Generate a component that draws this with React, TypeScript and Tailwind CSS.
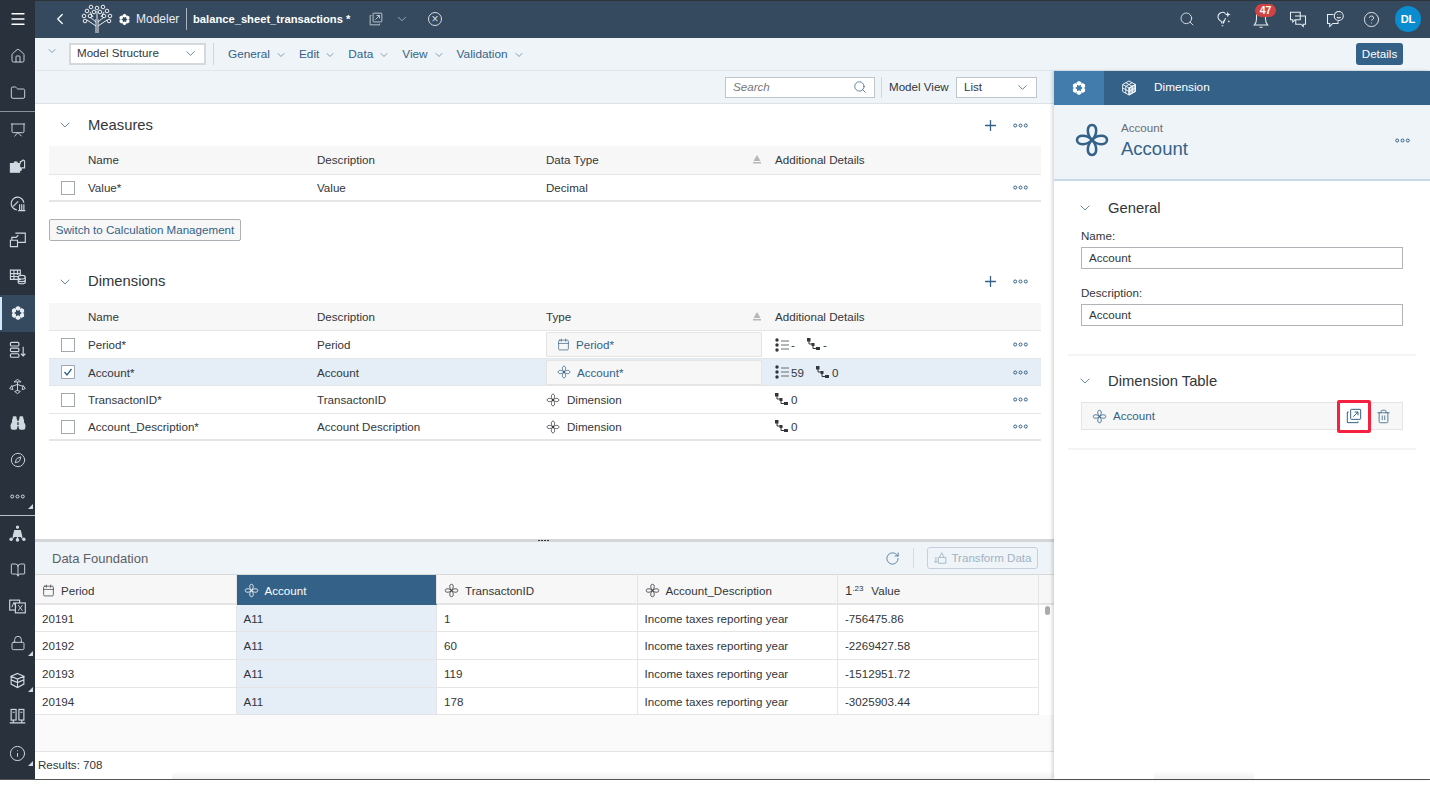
import type { ReactNode } from 'react';
import {
  Binoculars,
  BookOpen,
  Calendar,
  ChevronDown,
  ChevronLeft,
  CircleHelp,
  Compass,
  Folder,
  House,
  Info,
  Lock,
  Menu,
  Plus,
  Presentation,
  RotateCw,
  Search,
  Trash2,
} from 'lucide-react';

const BLUE = '#346187';

/** The four-loop glyph SAP uses for a dimension. */
function Flower({ size = 14, color = 'currentColor', width = 1.4 }: { size?: number; color?: string; width?: number }) {
  const petal = 'M12 12C8.6 9 8 2 12 2s3.400 7 0 10z';
  return (
    <svg width={size} height={size} viewBox="0 0 24 24" fill="none" stroke={color} strokeWidth={width} className="shrink-0">
      {[0, 90, 180, 270].map((r) => (
        <path key={r} d={petal} transform={`rotate(${r} 12 12)`} />
      ))}
      {size < 20 && <circle cx="12" cy="12" r="1.6" fill={color} stroke="none" />}
    </svg>
  );
}

/** Ring of little cells, the Modeler product glyph. */
function ModelGlyph({ size = 16, color = '#fff' }: { size?: number; color?: string }) {
  return (
    <svg width={size} height={size} viewBox="0 0 24 24" fill={color} className="shrink-0">
      {[0, 60, 120, 180, 240, 300].map((r) => (
        <path key={r} d="M12 1.500l3.600 2v3.200l-3.600 1.800-3.600-1.800V3.500z" transform={`rotate(${r} 12 12)`} />
      ))}
    </svg>
  );
}

function CubeGlyph() {
  return (
    <svg width={16} height={16} viewBox="0 0 24 24" fill="none" stroke="#fff" strokeWidth="1.300" className="shrink-0">
      <path d="M12 1.500l9.500 5.200v10.600L12 22.500l-9.500-5.200V6.700z" />
      <path d="M2.500 6.700L12 12l9.500-5.300M12 12v10.500M7.200 4.100l9.500 5.300M16.800 4.100L7.200 9.400M2.500 12l9.500 5.200 9.500-5.200M7.200 9.400v10.500M16.800 9.400v10.500" />
      <path d="M12 12l9.500-5.300v10.600L12 22.500z" fill="#fff" fillOpacity="0.55" />
    </svg>
  );
}

function TreeLogo() {
  return (
    <svg width={34} height={30} viewBox="0 0 34 30" fill="none" stroke="#fff" strokeWidth="0.9" className="shrink-0">
      <path d="M16 29V15M18 29V15M16 18l-6-5M18 18l6-5M16 22l-9-6M18 22l9-6M17 15V7M13 13l-3-5M21 13l3-5" />
      {[
        [17, 4],
        [11, 3],
        [23, 3],
        [7, 7],
        [27, 7],
        [4, 12],
        [30, 12],
        [5, 17],
        [29, 17],
        [10, 12],
        [24, 12],
        [14, 8],
        [20, 8],
      ].map(([cx, cy]) => (
        <circle key={`${cx}-${cy}`} cx={cx} cy={cy} r="1.8" />
      ))}
    </svg>
  );
}

/** Box with an arrow leaving it, stacked on a second box. */
function OpenInNew({ color = BLUE, size = 17 }: { color?: string; size?: number }) {
  return (
    <svg width={size} height={size} viewBox="0 0 24 24" fill="none" stroke={color} strokeWidth="1.5" className="shrink-0">
      <rect x="7" y="2" width="15" height="15" rx="1" />
      <path d="M4 6H2v16h16v-2M11 13l7-7M13 6h5v5" />
    </svg>
  );
}

function Hierarchy() {
  return (
    <svg width={13} height={13} viewBox="0 0 13 13" className="shrink-0" fill="#32363a">
      <rect x="0" y="0" width="3.500" height="3.500" />
      <rect x="4.500" y="5" width="3" height="3" />
      <rect x="9" y="9" width="4" height="3" />
      <path d="M2 3v3h3M6 8v2.500h3" fill="none" stroke="#32363a" />
    </svg>
  );
}

function ListIcon() {
  return (
    <svg width={14} height={14} viewBox="0 0 14 14" className="shrink-0">
      {[2, 7, 12].map((y) => (
        <circle key={y} cx="2" cy={y} r="1.700" fill="#32363a" />
      ))}
      <path d="M6 3h8M6 7h8M6 11h8" stroke="#6a6d70" strokeWidth="1" />
    </svg>
  );
}

function MoreDots({ color = BLUE }: { color?: string }) {
  return (
    <svg width={15} height={5} viewBox="0 0 15 5" fill="none" stroke={color} strokeWidth="1" className="shrink-0">
      <circle cx="2.200" cy="2.500" r="1.500" />
      <circle cx="7.500" cy="2.500" r="1.500" />
      <circle cx="12.800" cy="2.500" r="1.500" />
    </svg>
  );
}

function SortUp() {
  return (
    <svg width={10} height={9} viewBox="0 0 10 9" fill="#b5b7b9" className="shrink-0">
      <path d="M5 0l3.500 6h-7zM1 7h8v1.500H1z" />
    </svg>
  );
}

function Check() {
  return (
    <svg width={10} height={10} viewBox="0 0 10 10" fill="none" stroke="#346187" strokeWidth="1.300">
      <path d="M1.500 5l2.500 3 4.500-6" />
    </svg>
  );
}

function Checkbox({ checked }: { checked?: boolean }) {
  return (
    <div className="ml-3 flex h-[14px] w-[14px] items-center justify-center border border-[#a3a8ad] bg-white">
      {checked && <Check />}
    </div>
  );
}

const sw = { size: 16, strokeWidth: 1.4, color: '#d1d9e0' };

function svgIcon(children: ReactNode) {
  return (
    <svg width={17} height={17} viewBox="0 0 24 24" fill="none" stroke="#d1d9e0" strokeWidth="1.600">
      {children}
    </svg>
  );
}

const upper: { icon: ReactNode; corner?: boolean; active?: boolean }[] = [
  { icon: <Presentation {...sw} /> },
  {
    icon: svgIcon(
      <>
        <path d="M2 8h5a2.500 2.500 0 015 0h3v5a2.500 2.500 0 010 5v2H2z" fill="#d1d9e0" />
        <path d="M16 8V5h2a2 2 0 014 0v9h-4" />
      </>,
    ),
  },
  {
    icon: svgIcon(
      <>
        <path d="M11 21a9 9 0 1110-10M6 16l7-7" />
        <path d="M15 13v9M18 13v9M21 13v9M13 22h10" />
      </>,
    ),
  },
  {
    icon: svgIcon(
      <>
        <path d="M9 3h14v13H13M2 13h10v9H2zM4 13V9h6l3-3" />
      </>,
    ),
  },
  {
    icon: svgIcon(
      <>
        <path d="M2 3h14v13H2zM2 8h14M2 12h11M7 3v13M12 3v7" />
        <ellipse cx="18" cy="13" rx="5" ry="2.500" fill="#29313c" />
        <path d="M13 13v7c0 3 10 3 10 0v-7M13 17c0 3 10 3 10 0" />
      </>,
    ),
  },
  { icon: <ModelGlyph size={16} color="#e6edf3" />, active: true },
  {
    icon: svgIcon(
      <>
        <rect x="2" y="2" width="12" height="5" rx="1.500" />
        <rect x="2" y="10" width="12" height="5" rx="1.500" />
        <rect x="2" y="18" width="12" height="5" rx="1.500" />
        <path d="M20 8v13M17 18l3 3 3-3" />
      </>,
    ),
  },
  {
    icon: svgIcon(
      <path d="M12 2l5 3.500H7zM1 15l3-4.500 1.500 6zM23 15l-3-4.500-1.500 6zM12 22l-4-3 4-1.500 4 1.500zM12 5.500V18M4 12l8-3 8 3" strokeWidth="1.300" />,
    ),
  },
  { icon: <Binoculars size={16} strokeWidth={2} color="#d1d9e0" fill="#d1d9e0" /> },
  { icon: <Compass {...sw} /> },
  { icon: <MoreDots color="#d1d9e0" />, corner: true },
];

const lower: { icon: ReactNode; corner?: boolean }[] = [
  {
    icon: svgIcon(
      <>
        <circle cx="12" cy="3" r="1.500" fill="#d1d9e0" />
        <path d="M8 8h8l2 8H6z" fill="#d1d9e0" />
        <circle cx="3" cy="20" r="1.700" fill="#d1d9e0" />
        <circle cx="21" cy="20" r="1.700" fill="#d1d9e0" />
        <circle cx="12" cy="21" r="1.700" fill="#d1d9e0" />
        <path d="M5 19l2-2M19 19l-2-2M12 16v4" />
      </>,
    ),
  },
  { icon: <BookOpen {...sw} /> },
  {
    icon: svgIcon(
      <>
        <rect x="1" y="3" width="14" height="14" />
        <rect x="9" y="7" width="14" height="14" fill="#29313c" />
        <path d="M4 13l3-7 3 7M13 10l6 8M19 10l-6 8" strokeWidth="1.300" />
      </>,
    ),
  },
  { icon: <Lock {...sw} />, corner: true },
  {
    icon: svgIcon(
      <>
        <path d="M12 2l9 4-9 4-9-4zM3 6v5l9 4 9-4V6M3 11v6l9 5 9-5v-6M12 10v12" />
      </>,
    ),
    corner: true,
  },
  {
    icon: svgIcon(
      <>
        <rect x="3" y="2" width="7" height="15" />
        <rect x="14" y="2" width="7" height="15" />
        <path d="M5 6h3M16 6h3M1 21h22M6 17v4M18 17v4" />
      </>,
    ),
  },
  { icon: <Info {...sw} size={17} />, corner: true },
];

function RailItem({ icon, corner, active }: { icon: ReactNode; corner?: boolean; active?: boolean }) {
  return (
    <div className={`relative flex h-[36.7px] items-center justify-center ${active ? 'bg-[#354a5f]' : ''}`}>
      {active && <div className="absolute left-0 top-[2px] h-[33px] w-[2px] bg-[#d1e8ff]" />}
      {icon}
      {corner && (
        <div className="absolute bottom-[6px] right-[2px] h-0 w-0 border-b-[5px] border-l-[5px] border-b-[#d1d9e0] border-l-transparent" />
      )}
    </div>
  );
}

function Rail() {
  return (
    <div className="flex w-[35px] shrink-0 flex-col bg-[#29313c]">
      <div className="flex h-[38px] shrink-0 items-center justify-center">
        <Menu size={18} color="#fff" strokeWidth={1.800} />
      </div>
      <RailItem icon={<House {...sw} />} />
      <RailItem icon={<Folder {...sw} />} />
      <div className="-mb-px h-px bg-[#8a939c]" />
      {upper.map((it, i) => (
        <RailItem key={i} {...it} />
      ))}
      <div className="-mb-px h-px bg-[#b8bfc6]" />
      {lower.map((it, i) => (
        <RailItem key={i} {...it} />
      ))}
    </div>
  );
}

function ShellIcon({ children }: { children: ReactNode }) {
  return <div className="relative flex w-[37px] items-center justify-center">{children}</div>;
}

function TopBar() {
  const c = { size: 16, color: '#e8edf2', strokeWidth: 1.300 };
  return (
    <div className="flex h-[38px] shrink-0 items-center border-t border-[#2e3338] bg-[#354a5f] pb-[1px] text-white">
      <ChevronLeft size={18} color="#fff" strokeWidth={1.700} className="ml-[16px]" />
      <div className="ml-[11px]">
        <TreeLogo />
      </div>
      <div className="ml-[4px]">
        <ModelGlyph size={13} />
      </div>
      <span className="ml-[5px] w-[44px] whitespace-nowrap text-[12px] text-[#e8edf2]">Modeler</span>
      <div className="mx-[6px] h-[22px] w-px bg-[#aab5c0]" />
      <span className="w-[176px] whitespace-nowrap text-[11.2px] font-bold">balance_sheet_transactions *</span>
      <OpenInNew color="#c9d3dc" size={14} />
      <ChevronDown size={14} color="#c9d3dc" strokeWidth={1.200} className="ml-[12px]" />
      <div className="ml-[19px] flex h-[14px] w-[14px] items-center justify-center rounded-full border border-[#d5dce3] text-[12px] leading-none text-[#d5dce3]">
        ×
      </div>
      <div className="ml-auto flex h-full items-stretch pr-[9px]">
        <ShellIcon>
          <Search {...c} />
        </ShellIcon>
        <ShellIcon>
          <svg width={18} height={18} viewBox="0 0 24 24" fill="none" stroke="#e8edf2" strokeWidth="1.400">
            <path d="M9 18v-2.500C6 14 4 12 4 9a6 6 0 0110-4.300M14 11c-.4 1.700-1.500 3-3 4.500V18zM9 21h2" />
            <path d="M17 2l1 3 3 1-3 1-1 3-1-3-3-1 3-1zM18.500 13l.5 1.500 1.500.5-1.500.5-.5 1.500-.5-1.500-1.500-.5 1.500-.5z" fill="#e8edf2" stroke="none" />
          </svg>
        </ShellIcon>
        <ShellIcon>
          <svg width={18} height={18} viewBox="0 0 24 24" fill="none" stroke="#e8edf2" strokeWidth="1.400">
            <path d="M3 20h18c-2-2-3-4-3-8V8a6 6 0 00-12 0v4c0 4-1 6-3 8zM10 23h4" />
          </svg>
          <div className="absolute left-[13px] top-[3px] flex h-[13px] w-[21px] items-center justify-center rounded-full bg-[#d04343] text-[10.5px] font-bold leading-none text-white">
            47
          </div>
        </ShellIcon>
        <ShellIcon>
          <svg width={18} height={18} viewBox="0 0 24 24" fill="none" stroke="#e8edf2" strokeWidth="1.400">
            <path d="M2 3h13v10H8l-3 3v-3H2zM8 8h14v11h-3v3l-3-3H9v-6" />
          </svg>
        </ShellIcon>
        <ShellIcon>
          <svg width={18} height={18} viewBox="0 0 24 24" fill="none" stroke="#e8edf2" strokeWidth="1.400">
            <path d="M10 6H2v12h3v4l4-4h7v-3" />
            <circle cx="17" cy="8" r="6" />
            <path d="M14.500 9.500c1 1.300 4 1.300 5 0M15 6h.5M18.500 6h.5" />
          </svg>
        </ShellIcon>
        <ShellIcon>
          <CircleHelp size={17} color="#e8edf2" strokeWidth={1.300} />
        </ShellIcon>
        <div className="ml-[5px] flex h-[26px] w-[26px] items-center justify-center self-center rounded-full bg-[#0a8dd0] text-[11px] font-bold text-white">
          DL
        </div>
      </div>
    </div>
  );
}

function MenuItem({ label, gap }: { label: string; gap: string }) {
  return (
    <div className={`flex items-center gap-[5px] text-[11.8px] text-[#346187] ${gap}`}>
      {label}
      <ChevronDown size={12} strokeWidth={1.200} color="#346187" />
    </div>
  );
}

function Toolbar() {
  return (
    <div className="flex h-[33px] shrink-0 items-center border-b border-[#dfe6ed] bg-[#eff4f9] pl-[11px] pr-[27px]">
      <ChevronDown size={12} strokeWidth={1.200} color="#346187" className="mb-[6px]" />
      <div className="ml-[11px] flex h-[22px] w-[137px] items-center justify-between border-2 border-[#d5d9dd] bg-white pb-[2px] pl-[6px] pr-[6px] text-[11.6px] text-[#32363a]">
        Model Structure
        <ChevronDown size={15} strokeWidth={1.200} color="#346187" />
      </div>
      <div className="ml-[7px] h-[22px] w-px bg-[#cfd6dc]" />
      <div className="ml-[14px] mt-[2px] flex items-center">
        <MenuItem label="General" gap="mr-[12px]" />
        <MenuItem label="Edit" gap="mr-[12px]" />
        <MenuItem label="Data" gap="mr-[12px]" />
        <MenuItem label="View" gap="mr-[12px]" />
        <MenuItem label="Validation" gap="" />
      </div>
      <div className="ml-auto flex h-[22px] w-[47px] items-center justify-center rounded-[3px] bg-[#346187] text-[11.6px] text-white">
        Details
      </div>
    </div>
  );
}

const cols = 'grid grid-cols-[39px_229px_229px_229px_1fr]';

function HeaderRow({ third }: { third: string }) {
  return (
    <div className={`${cols} h-[28.5px] items-center border-b border-[#e5e5e5] bg-[#f7f7f7] text-[11.6px] text-[#32363a]`}>
      <div />
      <div>Name</div>
      <div>Description</div>
      <div className="flex items-center justify-between pr-[13px]">
        {third}
        <SortUp />
      </div>
      <div>Additional Details</div>
    </div>
  );
}

function SectionHead({ title }: { title: string }) {
  return (
    <div className="flex h-[42px] items-center">
      <ChevronDown size={16} strokeWidth={1.100} color="#346187" className="ml-[8px]" />
      <span className="ml-[15px] text-[14.8px] text-[#32363a]">{title}</span>
      <Plus size={17} strokeWidth={1.800} color="#346187" className="ml-auto mr-[14px]" />
      <div className="mr-[13px]">
        <MoreDots />
      </div>
    </div>
  );
}

function TypeBox({ icon, label }: { icon: ReactNode; label: string }) {
  return (
    <div className="flex h-[25px] w-[216px] items-center gap-[6px] rounded-[1px] border border-[#e4e4e4] bg-[#f7f7f7] pl-[10px] text-[#346187]">
      {icon}
      {label}
    </div>
  );
}

function Details({ list, tree }: { list?: string; tree: string }) {
  return (
    <div className="flex items-center">
      {list !== undefined && (
        <>
          <ListIcon />
          <span className="ml-[2px] mr-[12px]">{list}</span>
        </>
      )}
      <Hierarchy />
      <span className="ml-[3px]">{tree}</span>
    </div>
  );
}

const dimensionRows: { name: string; desc: string; type: ReactNode; details: ReactNode; selected?: boolean }[] = [
  {
    name: 'Period*',
    desc: 'Period',
    type: <TypeBox icon={<Calendar size={13} strokeWidth={1.300} color="#346187" />} label="Period*" />,
    details: <Details list="-" tree="-" />,
  },
  {
    name: 'Account*',
    desc: 'Account',
    type: <TypeBox icon={<Flower size={14} color="#346187" />} label="Account*" />,
    details: <Details list="59" tree="0" />,
    selected: true,
  },
  {
    name: 'TransactonID*',
    desc: 'TransactonID',
    type: (
      <div className="flex items-center gap-[7px]">
        <Flower size={14} />
        Dimension
      </div>
    ),
    details: <Details tree="0" />,
  },
  {
    name: 'Account_Description*',
    desc: 'Account Description',
    type: (
      <div className="flex items-center gap-[7px]">
        <Flower size={14} />
        Dimension
      </div>
    ),
    details: <Details tree="0" />,
  },
];

function Row({
  name,
  desc,
  type,
  details,
  selected,
  last,
}: {
  name: string;
  desc: string;
  type: ReactNode;
  details: ReactNode;
  selected?: boolean;
  last?: boolean;
}) {
  return (
    <div
      className={`${cols} h-[27.5px] items-center pt-[1px] text-[11.6px] text-[#32363a] ${
        last ? 'border-b-2' : 'border-b'
      } border-[#e5e5e5] ${selected ? 'bg-[#e5edf6]' : 'bg-white'}`}
    >
      <Checkbox checked={selected} />
      <div>{name}</div>
      <div>{desc}</div>
      <div>{type}</div>
      <div className="flex items-center justify-between pr-[13px]">
        {details}
        <MoreDots />
      </div>
    </div>
  );
}

function ModelStructure() {
  return (
    <div className="flex h-[435px] shrink-0 flex-col overflow-hidden bg-white pl-[14px] pr-[13px]">
      <SectionHead title="Measures" />
      <HeaderRow third="Data Type" />
      <Row name="Value*" desc="Value" type="Decimal" details={<span />} last />
      <button className="mt-[17px] h-[22px] w-[192px] whitespace-nowrap rounded-[2px] border border-[#abb0b4] bg-[#f7f7f7] text-center text-[11.6px] leading-none text-[#346187]">
        Switch to Calculation Management
      </button>
      <div className="mt-[19.5px]">
        <SectionHead title="Dimensions" />
      </div>
      <HeaderRow third="Type" />
      {dimensionRows.map((r, i) => (
        <Row key={r.name} {...r} last={i === dimensionRows.length - 1} />
      ))}
    </div>
  );
}

const foundationCols = [
  { label: 'Period', icon: <Calendar size={13} strokeWidth={1.300} color="#32363a" /> },
  { label: 'Account', icon: <Flower size={15} color="#fff" />, active: true },
  { label: 'TransactonID', icon: <Flower size={15} /> },
  { label: 'Account_Description', icon: <Flower size={15} /> },
  {
    label: 'Value',
    icon: (
      <span className="text-[13px] leading-none">
        1<sup className="text-[8px]">.23</sup>
      </span>
    ),
  },
];

const foundationRows = [
  ['20191', 'A11', '1', 'Income taxes reporting year', '-756475.86'],
  ['20192', 'A11', '60', 'Income taxes reporting year', '-2269427.58'],
  ['20193', 'A11', '119', 'Income taxes reporting year', '-1512951.72'],
  ['20194', 'A11', '178', 'Income taxes reporting year', '-3025903.44'],
];

const dfCols = 'grid grid-cols-[201.5px_200.5px_200.5px_200.5px_201px_1fr]';

function DataFoundation() {
  return (
    <div className="flex min-h-0 flex-1 flex-col">
      <div className="relative h-[3px] shrink-0 bg-[#d4d6d8]">
        <svg width={12} height={3} viewBox="0 0 12 3" fill="#32363a" className="absolute left-[503px] top-0">
          <path d="M0 1h2v1H0zM3 1h2v1H3zM6 1h2v1H6zM9 1h2v1H9z" />
        </svg>
      </div>
      <div className="flex h-[33px] shrink-0 items-center border-b border-[#d9d9d9] bg-[#eff4f9] pl-[17px] pr-[16px]">
        <span className="pt-[2px] text-[13px] text-[#5c6064]">Data Foundation</span>
        <RotateCw size={15} strokeWidth={1.200} color="#346187" className="ml-auto" />
        <div className="ml-[13px] h-[20px] w-px bg-[#d3dae0]" />
        <div className="ml-[13px] flex h-[22px] w-[111px] items-center justify-center gap-[4px] whitespace-nowrap rounded-[3px] border border-[#c5d0da] text-[11.6px] text-[#9fb3c4]">
          <svg width={14} height={14} viewBox="0 0 24 24" fill="none" stroke="#9fb3c4" strokeWidth="1.500">
            <path d="M9 11h13v10H9zM11 11l4-8 4 8M5 10v10M2 17l3 3 3-3" />
          </svg>
          Transform Data
        </div>
      </div>
      <div className={`${dfCols} h-[29.5px] shrink-0 bg-[#f7f7f7] text-[11.6px] text-[#32363a]`}>
        {foundationCols.map((c) => (
          <div
            key={c.label}
            className={`flex items-center gap-[6px] border-b-2 border-r border-[#e5e5e5] pl-[7px] pt-[3px] ${
              c.active ? 'border-b-[#346187] bg-[#346187] text-white' : ''
            }`}
          >
            {c.icon}
            <span className={c.label === 'Value' ? 'ml-[2px]' : ''}>{c.label}</span>
          </div>
        ))}
        <div className="border-b-2 border-[#e5e5e5]" />
      </div>
      <div className="relative shrink-0 bg-white">
        {foundationRows.map((row) => (
          <div key={row[0]} className={`${dfCols} h-[27.7px] text-[11.6px] text-[#32363a]`}>
            {row.map((cell, i) => (
              <div
                key={i}
                className={`flex items-center border-b border-r border-[#e5e5e5] pl-[7px] pt-[1px] ${
                  i === 1 ? 'bg-[#e5edf6]' : ''
                }`}
              >
                {cell}
              </div>
            ))}
            <div />
          </div>
        ))}
        <div className="absolute right-[4px] top-[1px] h-[9px] w-[5px] rounded-full bg-[#a9abad]" />
      </div>
      <div className="min-h-0 flex-1 border-b border-[#e5e5e5] bg-[#fafafa]" />
      <div className="flex h-[27px] shrink-0 items-center bg-white pl-[3px] text-[11.6px] text-[#32363a]">
        Results: 708
        <div className="ml-[70px] h-[8px] flex-1 self-end bg-linear-to-t from-[#f1f1f1] to-white" />
      </div>
    </div>
  );
}

function Field({ label, value }: { label: string; value: string }) {
  return (
    <div className="mb-[15px]">
      <div className="mb-[2px] text-[11.6px] leading-[18px] text-[#32363a]">{label}</div>
      <div className="flex h-[22px] items-center border border-[#b0b4b8] bg-white pl-[7px] text-[11.6px] text-[#32363a]">
        {value}
      </div>
    </div>
  );
}

function DetailHead({ title }: { title: string }) {
  return (
    <div className="flex h-[20px] items-center">
      <ChevronDown size={16} strokeWidth={1.100} color="#346187" />
      <span className="ml-[15px] text-[14.8px] text-[#32363a]">{title}</span>
    </div>
  );
}

function DetailsPanel() {
  return (
    <div className="z-10 flex w-[376px] shrink-0 flex-col bg-white shadow-[-2px_0_3px_rgba(0,0,0,0.15)]">
      <div className="flex h-[34px] shrink-0 items-stretch bg-[#346187]">
        <div className="flex w-[50px] items-center justify-center bg-[#427cac]">
          <ModelGlyph size={16} />
        </div>
        <div className="flex w-[50px] items-center justify-center">
          <CubeGlyph />
        </div>
        <div className="flex items-center text-[11.8px] text-white">Dimension</div>
      </div>
      <div className="flex h-[76px] shrink-0 items-center border-b-2 border-[#c7d9ea] bg-[#eff4f9] pb-[4px] pl-[20px] pr-[20px]">
        <Flower size={36} color="#346187" width={1.700} />
        <div className="ml-[11px] flex flex-col">
          <span className="text-[11.6px] leading-[16px] text-[#6a6d70]">Account</span>
          <span className="text-[18.5px] leading-[25px] text-[#346187]">Account</span>
        </div>
        <div className="ml-auto">
          <MoreDots />
        </div>
      </div>
      <div className="mx-[14px] border-b-2 border-[#f4f4f4] px-[9px] pb-[13px] pt-[17px]">
        <DetailHead title="General" />
        <div className="mt-[9px] pl-[4px] pr-[4px]">
          <Field label="Name:" value="Account" />
          <Field label="Description:" value="Account" />
        </div>
      </div>
      <div className="mx-[14px] border-b-2 border-[#f4f4f4] px-[9px] pb-[18px] pt-[15px]">
        <DetailHead title="Dimension Table" />
        <div className="ml-[4px] mr-[4px] mt-[11px] flex h-[28px] items-center border border-[#e4e4e4] bg-[#f7f7f7] pl-[10px] text-[11.6px] text-[#346187]">
          <Flower size={15} color="#346187" />
          <span className="ml-[6px]">Account</span>
          <div className="z-10 -my-[3px] ml-auto flex h-[33px] w-[34px] items-center justify-center rounded-[2px] border-[3px] border-[#f5213f] bg-white">
            <OpenInNew size={16} />
          </div>
          <Trash2 size={15} strokeWidth={1.300} color="#346187" className="ml-[5px] mr-[11px]" />
        </div>
      </div>
      <div className="mt-auto ml-[100px] h-[8px] w-[100px] bg-linear-to-t from-[#f1f1f1] to-white" />
    </div>
  );
}

export default function App() {
  return (
    <div className="h-[785px] w-[1430px] overflow-hidden bg-white font-['Liberation_Sans',sans-serif]">
      <div className="flex h-[779.5px] border-b border-[#555]">
        <Rail />
        <div className="flex min-w-0 flex-1 flex-col">
          <TopBar />
          <Toolbar />
          <div className="flex min-h-0 flex-1">
            <div className="flex min-w-0 flex-1 flex-col">
              <div className="flex h-[33px] shrink-0 items-center justify-end gap-[6px] border-b border-[#dfe2e5] bg-[#eff4f9] pr-[17px]">
                <div className="flex h-[21px] w-[150px] items-center justify-between border border-[#bfc5ca] bg-white pl-[7px] pr-[7px] text-[11.6px] italic text-[#74777a]">
                  Search
                  <Search size={14} strokeWidth={1.300} color="#346187" />
                </div>
                <div className="h-[21px] w-px bg-[#cfd6dc]" />
                <span className="ml-[1px] w-[61px] whitespace-nowrap text-[11.6px] text-[#32363a]">Model View</span>
                <div className="flex h-[21px] w-[81px] items-center justify-between border border-[#bfc5ca] bg-white pl-[7px] pr-[6px] text-[11.6px] text-[#32363a]">
                  List
                  <ChevronDown size={15} strokeWidth={1.200} color="#346187" />
                </div>
              </div>
              <ModelStructure />
              <DataFoundation />
            </div>
            <DetailsPanel />
          </div>
        </div>
      </div>
    </div>
  );
}
